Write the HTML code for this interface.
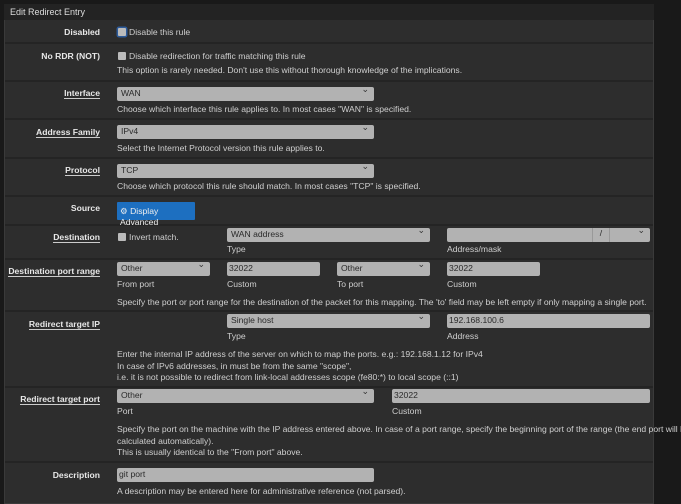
<!DOCTYPE html><html><head><style>
*{margin:0;padding:0;box-sizing:border-box}
body{width:681px;height:500px;background:#191919;font-family:"Liberation Sans",sans-serif;font-size:8.6px;color:#cfcfcf;position:relative;overflow:hidden}
.panel{position:absolute;left:4px;top:4px;width:650px;height:500px;background:#2d2d2d;border:1px solid #3a3a3a}
.hd{position:absolute;left:4px;top:4px;width:650px;height:16px;background:#232323;color:#ddd;font-size:9px;padding:3px 6px}
.sep{position:absolute;left:5px;width:648px;height:2px;background:#242424}
.a{position:absolute;white-space:nowrap}
.l{position:absolute;right:581px;font-weight:bold;color:#e8e8e8;white-space:nowrap}
.u{border-bottom:1px solid #ccc}
.in{position:absolute;height:14px;background:#b2b2b2;border-radius:2px;color:#2a2a2a;padding:1px 4px;font-size:8.6px}
.in.s::after{content:"⌄";position:absolute;right:5px;top:-3px;font-size:9px;color:#333}
.cb{position:absolute;width:8px;height:8px;background:#bbb;border-radius:1px}
.btn{position:absolute;left:117px;top:202px;width:78px;height:18px;background:#1d6fc0;color:#eee;padding:4px 3px;border-radius:1px}
</style></head><body>
<div class="panel"></div>
<div class="hd">Edit Redirect Entry</div>
<div class="sep" style="top:42px"></div>
<div class="sep" style="top:80px"></div>
<div class="sep" style="top:118px"></div>
<div class="sep" style="top:157px"></div>
<div class="sep" style="top:195px"></div>
<div class="sep" style="top:224px"></div>
<div class="sep" style="top:258px"></div>
<div class="sep" style="top:310px"></div>
<div class="sep" style="top:386px"></div>
<div class="sep" style="top:461px"></div>

<div class="l" style="top:27px">Disabled</div>
<div class="cb" style="left:118px;top:28px;box-shadow:0 0 0 1.5px #2c5a9a"></div>
<div class="a" style="left:129px;top:27px">Disable this rule</div>

<div class="l" style="top:51px">No RDR (NOT)</div>
<div class="cb" style="left:118px;top:52px"></div>
<div class="a" style="left:129px;top:51px">Disable redirection for traffic matching this rule</div>
<div class="a" style="left:117px;top:65px">This option is rarely needed. Don't use this without thorough knowledge of the implications.</div>

<div class="l" style="top:88px"><span class="u">Interface</span></div>
<div class="in s" style="left:117px;top:87px;width:257px">WAN</div>
<div class="a" style="left:117px;top:104px">Choose which interface this rule applies to. In most cases "WAN" is specified.</div>

<div class="l" style="top:127px"><span class="u">Address Family</span></div>
<div class="in s" style="left:117px;top:125px;width:257px">IPv4</div>
<div class="a" style="left:117px;top:143px">Select the Internet Protocol version this rule applies to.</div>

<div class="l" style="top:165px"><span class="u">Protocol</span></div>
<div class="in s" style="left:117px;top:164px;width:257px">TCP</div>
<div class="a" style="left:117px;top:181px">Choose which protocol this rule should match. In most cases "TCP" is specified.</div>

<div class="l" style="top:203px">Source</div>
<div class="btn">⚙ Display Advanced</div>

<div class="l" style="top:232px"><span class="u">Destination</span></div>
<div class="cb" style="left:118px;top:233px"></div>
<div class="a" style="left:129px;top:232px">Invert match.</div>
<div class="in s" style="left:227px;top:228px;width:203px">WAN address</div>
<div class="a" style="left:227px;top:244px">Type</div>
<div class="in s" style="left:447px;top:228px;width:203px"><span style="position:absolute;left:145px;top:0;height:14px;border-left:1px solid #999;border-right:1px solid #999;width:18px;text-align:center">/</span></div>
<div class="a" style="left:447px;top:244px">Address/mask</div>

<div class="l" style="top:266px"><span class="u">Destination port range</span></div>
<div class="in s" style="left:117px;top:262px;width:93px">Other</div>
<div class="in" style="left:227px;top:262px;width:93px;padding-left:2px">32022</div>
<div class="in s" style="left:337px;top:262px;width:93px">Other</div>
<div class="in" style="left:447px;top:262px;width:93px;padding-left:2px">32022</div>
<div class="a" style="left:117px;top:279px">From port</div>
<div class="a" style="left:227px;top:279px">Custom</div>
<div class="a" style="left:337px;top:279px">To port</div>
<div class="a" style="left:447px;top:279px">Custom</div>
<div class="a" style="left:117px;top:297px">Specify the port or port range for the destination of the packet for this mapping. The 'to' field may be left empty if only mapping a single port.</div>

<div class="l" style="top:319px"><span class="u">Redirect target IP</span></div>
<div class="in s" style="left:227px;top:314px;width:203px">Single host</div>
<div class="in" style="left:447px;top:314px;width:203px;padding-left:2px">192.168.100.6</div>
<div class="a" style="left:227px;top:331px">Type</div>
<div class="a" style="left:447px;top:331px">Address</div>
<div class="a" style="left:117px;top:349px;line-height:11.5px">Enter the internal IP address of the server on which to map the ports. e.g.: 192.168.1.12 for IPv4<br>In case of IPv6 addresses, in must be from the same "scope",<br>i.e. it is not possible to redirect from link-local addresses scope (fe80:*) to local scope (::1)</div>

<div class="l" style="top:394px"><span class="u">Redirect target port</span></div>
<div class="in s" style="left:117px;top:389px;width:257px">Other</div>
<div class="in" style="left:392px;top:389px;width:258px;padding-left:2px">32022</div>
<div class="a" style="left:117px;top:406px">Port</div>
<div class="a" style="left:392px;top:406px">Custom</div>
<div class="a" style="left:117px;top:424px;line-height:11.5px">Specify the port on the machine with the IP address entered above. In case of a port range, specify the beginning port of the range (the end port will be<br>calculated automatically).<br>This is usually identical to the "From port" above.</div>

<div class="l" style="top:470px">Description</div>
<div class="in" style="left:117px;top:468px;width:257px;padding-left:2px">git port</div>
<div class="a" style="left:117px;top:486px">A description may be entered here for administrative reference (not parsed).</div>
</body></html>
